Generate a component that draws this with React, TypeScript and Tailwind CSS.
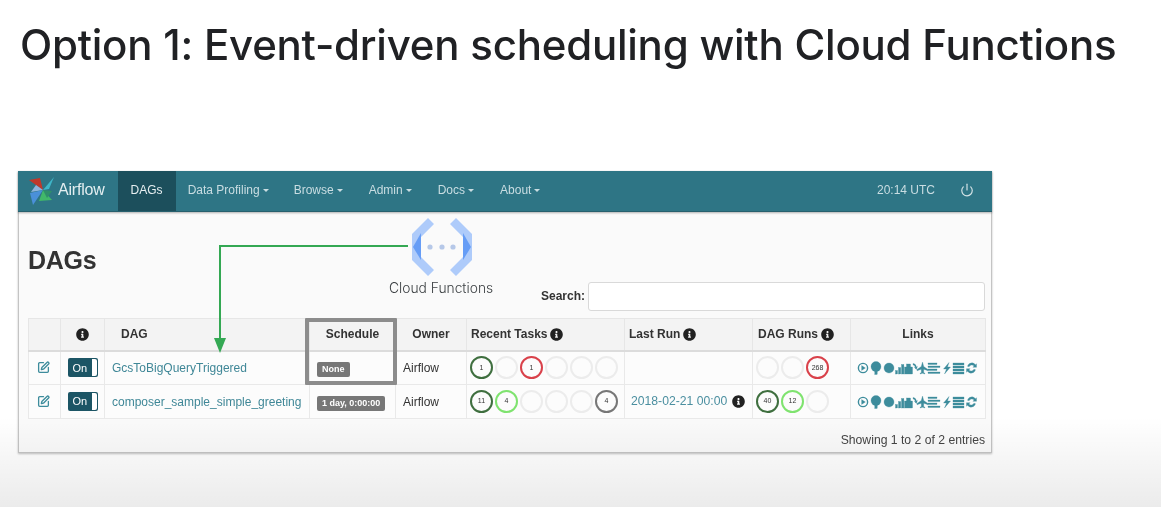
import React from "react";
import { FaInfoCircle } from "react-icons/fa";
import { Power, SquarePen } from "lucide-react";

const sans = "[font-family:'Liberation_Sans',Arial,sans-serif]";

function Nav({ label, active, caret = true }: { label: string; active?: boolean; caret?: boolean }) {
  return (
    <div className={`h-full flex items-center px-[13px] pb-[2px] text-[12px] ${active ? "bg-[#1c4f5c] text-[#e6eef0] -mr-px" : "text-[#c9dde2]"}`}>
      {label}
      {caret && <span className="ml-[3px] mt-[1px] w-0 h-0 border-x-[3px] border-x-transparent border-t-[3px] border-t-[#c9dde2]" />}
    </div>
  );
}

function Logo() {
  return (
    <svg width="28" height="30" viewBox="0 0 28 30" className="shrink-0">
      <polygon points="1,4 12,2 15,14" fill="#c0392b" />
      <polygon points="15,14 26,1 21,13" fill="#3fb6c8" />
      <polygon points="15,14 8,9 3,16" fill="#8fb4dc" />
      <polygon points="15,14 2,17 5,29" fill="#4a90d9" />
      <polygon points="15,14 11,25 24,24" fill="#41b86a" />
      <polygon points="15,14 24,15 19,22" fill="#2f8f6a" />
    </svg>
  );
}

function CloudIcon() {
  return (
    <svg width="60" height="58" viewBox="0 0 60 58">
      <polygon points="16,0 22,6 9,19 9,39 22,52 16,58 0,42 0,16" fill="#aecbfa" />
      <polygon points="9,15 9,42 1,29" fill="#669df6" />
      <polygon points="44,0 38,6 51,19 51,39 38,52 44,58 60,42 60,16" fill="#aecbfa" />
      <polygon points="51,15 51,42 59,29" fill="#669df6" />
      <circle cx="18" cy="29" r="2.6" fill="#b6c8e8" />
      <circle cx="30" cy="29" r="2.6" fill="#b6c8e8" />
      <circle cx="41" cy="29" r="2.6" fill="#b6c8e8" />
    </svg>
  );
}

function LinkIcons() {
  return (
    <svg width="122" height="14" viewBox="0 0 122 14" fill="#3d8c9c" stroke="#3d8c9c" strokeWidth="0.3">
      <circle cx="6" cy="7" r="4.6" fill="none" strokeWidth="1.4" />
      <polygon points="4.6,4.6 4.6,9.4 8.4,7" />
      <circle cx="19" cy="5.6" r="5" />
      <rect x="17.8" y="8" width="2.4" height="5.5" />
      <circle cx="32" cy="7" r="5" />
      <rect x="38.5" y="9.5" width="2" height="3.5" />
      <rect x="41.5" y="6.5" width="2.2" height="6.5" />
      <rect x="44.5" y="3.5" width="2.4" height="9.5" />
      <rect x="47.5" y="6" width="8" height="7" />
      <rect x="49.5" y="3" width="4" height="3.2" />
      <path d="M56 2.5 q3 .4 3.4 3.5 l1 -.6 -1 3 -2 -2 1 0 q-.4 -2 -2.4 -2.6z" />
      <path d="M65.5 1 l1.2 4.5 4.3 3 v1.3 l-4.2 -1.6 -.2 3 1.4 1.3 v.5 l-2.5 -.7 -2.5 .7 v-.5 l1.4 -1.3 -.2 -3 -4.2 1.6 v-1.3 l4.3 -3z" />
      <rect x="71" y="2" width="9" height="1.5" />
      <rect x="71" y="5" width="12" height="1.5" />
      <rect x="71" y="8" width="9" height="1.5" />
      <rect x="71" y="11" width="12" height="1.5" />
      <polygon points="92,1.5 86.5,8 89.5,8 87.5,13 93.5,6 90.5,6" />
      <rect x="96" y="2" width="11" height="2" />
      <rect x="96" y="5" width="11" height="2" />
      <rect x="96" y="8" width="11" height="2" />
      <rect x="96" y="11" width="11" height="2" />
      <path d="M112.5 2.5 a4.7 4.7 0 0 1 6 1.2 l1 -1 v3.6 h-3.6 l1.2 -1.2 a3 3 0 0 0 -5 .6 l-1.6 -.4 a4.7 4.7 0 0 1 2 -2.8z" />
      <path d="M116.5 11.5 a4.7 4.7 0 0 1 -6 -1.2 l-1 1 v-3.6 h3.6 l-1.2 1.2 a3 3 0 0 0 5 -.6 l1.6 .4 a4.7 4.7 0 0 1 -2 2.8z" />
    </svg>
  );
}

function Circle({ n, c = "border-[#ececec]" }: { n?: string; c?: string }) {
  return (
    <div className={`w-[23px] h-[23px] rounded-full border-2 ${c} shrink-0 flex items-center justify-center text-[7px] text-[#333]`}>
      {n}
    </div>
  );
}

const dark = "border-[#3f6f3f]";
const lime = "border-[#7fe36f]";
const red = "border-[#d9414a]";
const gray = "border-[#777777]";

function Toggle() {
  return (
    <div className="mx-auto w-[30px] h-[19px] rounded-[2px] bg-[#1c5565] flex items-center justify-between text-white text-[11px] pl-[5px] pr-[1px]">
      On
      <span className="w-[5px] h-[17px] bg-white rounded-r-[2px]" />
    </div>
  );
}

function Badge({ t }: { t: string }) {
  return <span className="inline-block h-[15px] leading-[15px] px-[5px] rounded-[2px] bg-[#777777] text-white text-[9px] font-bold">{t}</span>;
}

const th = "border border-[#e6e6e6] border-b-2 border-b-[#dcdcdc] bg-[#f3f3f3] font-bold text-[12px] text-[#333] h-[32px] p-0";
const td = "border border-[#e9e9e9] h-[34px] p-0 text-[12px]";

function Row({ name, badge, last, tasks, runs }: { name: string; badge: string; last?: string; tasks: React.ReactNode; runs: React.ReactNode }) {
  return (
    <tr>
      <td className={td}><SquarePen className="mx-auto -translate-x-px text-[#3d8c9c] w-[13px] h-[13px]" strokeWidth={2.4} /></td>
      <td className={td}><Toggle /></td>
      <td className={`${td} pl-[7px] text-[#3f8797]`}>{name}</td>
      <td className={`${td} pl-[7px]`}><Badge t={badge} /></td>
      <td className={`${td} pl-[7px] text-[#333]`}>Airflow</td>
      <td className={`${td} pl-[3px]`}><div className="flex gap-[2px]">{tasks}</div></td>
      <td className={`${td} pl-[6px] text-[#4b8fa0]`}>
        {last && (
          <div className="flex items-center gap-[5px] text-[12.2px]">
            {last}
            <FaInfoCircle className="text-[#222] text-[13px]" />
          </div>
        )}
      </td>
      <td className={`${td} pl-[3px]`}><div className="flex gap-[2px]">{runs}</div></td>
      <td className={`${td} pl-[6px]`}><LinkIcons /></td>
    </tr>
  );
}

export default function App() {
  return (
    <div className={`relative w-[1161px] h-[507px] overflow-hidden bg-white blur-[0.4px] ${sans}`}>
      <h1 className="h-[171px] pt-[18px] pl-[20px] text-[42px] leading-[54px] text-[#202124] font-medium [font-family:Inter,sans-serif] tracking-[-0.23px] whitespace-nowrap">
        Option 1: Event-driven scheduling with Cloud Functions
      </h1>

      <div className="ml-[18px] w-[974px] h-[282px] bg-[#fafafa] border border-t-0 border-[#c4c4c4] shadow-[0_1px_2px_rgba(0,0,0,0.25)]">
        <div className="h-[41px] -mx-px bg-[#2e7585] border-b border-[#27606e] flex items-center pl-[10px] pr-[18px] shadow-[0_1px_2px_rgba(0,0,0,0.3)]">
          <Logo />
          <span className="text-[16px] pb-[2px] text-[#e3eef0] ml-[2px] mr-[13px] tracking-[-0.2px]">Airflow</span>
          <Nav label="DAGs" active caret={false} />
          <Nav label="Data Profiling" />
          <div className="-ml-px" />
          <Nav label="Browse" />
          <Nav label="Admin" />
          <Nav label="Docs" />
          <Nav label="About" />
          <span className="ml-auto pb-[2px] text-[12px] text-[#c9dde2]">20:14 UTC</span>
          <Power className="ml-[25px] mb-[2px] w-[14px] h-[14px] text-[#d5e4e7]" strokeWidth={2} />
        </div>

        <div className="pl-[9px] pr-[6px]">
          <div className="relative h-[106px]">
            <h2 className="absolute left-0 top-[34px] text-[25px] leading-[28px] font-bold text-[#333] tracking-[-0.3px]">DAGs</h2>
            <div className="absolute right-0 top-[70px] flex items-center gap-[3px]">
              <span className="pb-[2px] text-[12px] font-bold text-[#333]">Search:</span>
              <div className="w-[397px] h-[29px] bg-white border border-[#d9d9d9] rounded-[3px]" />
            </div>
          </div>
          <table className="w-[957px] table-fixed border-collapse">
            <colgroup>
              <col className="w-[32px]" />
              <col className="w-[44px]" />
              <col className="w-[205px]" />
              <col className="w-[86px]" />
              <col className="w-[71px]" />
              <col className="w-[158px]" />
              <col className="w-[128px]" />
              <col className="w-[98px]" />
              <col className="w-[135px]" />
            </colgroup>
            <thead>
              <tr>
                <th className={th} />
                <th className={th}><FaInfoCircle className="mx-auto text-[13px] text-[#222]" /></th>
                <th className={`${th} text-left pl-[16px]`}>DAG</th>
                <th className={th}>Schedule</th>
                <th className={th}>Owner</th>
                <th className={`${th} text-left pl-[4px]`}>
                  <div className="flex items-center gap-[3px]">Recent Tasks <FaInfoCircle className="text-[13px] text-[#222]" /></div>
                </th>
                <th className={`${th} text-left pl-[4px]`}>
                  <div className="flex items-center gap-[3px]">Last Run <FaInfoCircle className="text-[13px] text-[#222]" /></div>
                </th>
                <th className={`${th} text-left pl-[5px]`}>
                  <div className="flex items-center gap-[3px]">DAG Runs <FaInfoCircle className="text-[13px] text-[#222]" /></div>
                </th>
                <th className={th}>Links</th>
              </tr>
            </thead>
            <tbody className="bg-[#fcfcfc]">
              <Row
                name="GcsToBigQueryTriggered"
                badge="None"
                tasks={<><Circle n="1" c={dark} /><Circle /><Circle n="1" c={red} /><Circle /><Circle /><Circle /></>}
                runs={<><Circle /><Circle /><Circle n="268" c={red} /></>}
              />
              <Row
                name="composer_sample_simple_greeting"
                badge="1 day, 0:00:00"
                last="2018-02-21 00:00"
                tasks={<><Circle n="11" c={dark} /><Circle n="4" c={lime} /><Circle /><Circle /><Circle /><Circle n="4" c={gray} /></>}
                runs={<><Circle n="40" c={dark} /><Circle n="12" c={lime} /><Circle /></>}
              />
            </tbody>
          </table>
          <div className="mt-[12px] text-right text-[12.2px] text-[#444]">Showing 1 to 2 of 2 entries</div>
        </div>
      </div>

      {/* overlays drawn over the screenshot */}
      <div className="absolute left-[412px] top-[218px]"><CloudIcon /></div>
      <div className="absolute left-[389px] top-[280px] text-[13.8px] leading-[17px] text-[#3c4043] [font-family:Inter,sans-serif] font-light">Cloud Functions</div>
      <svg className="absolute left-[210px] top-[240px]" width="200" height="114" viewBox="0 0 200 114">
        <path d="M198 6 H10 V100" fill="none" stroke="#34a853" strokeWidth="2" />
        <polygon points="4,98 16,98 10,113" fill="#34a853" />
      </svg>
      <div className="absolute left-[305px] top-[318px] w-[92px] h-[67px] border-[4px] border-[#8c8c8c] rounded-[1px]" />
      <div className="absolute inset-x-0 bottom-0 h-[90px] bg-gradient-to-b from-transparent to-[#00000014] pointer-events-none" />
    </div>
  );
}
